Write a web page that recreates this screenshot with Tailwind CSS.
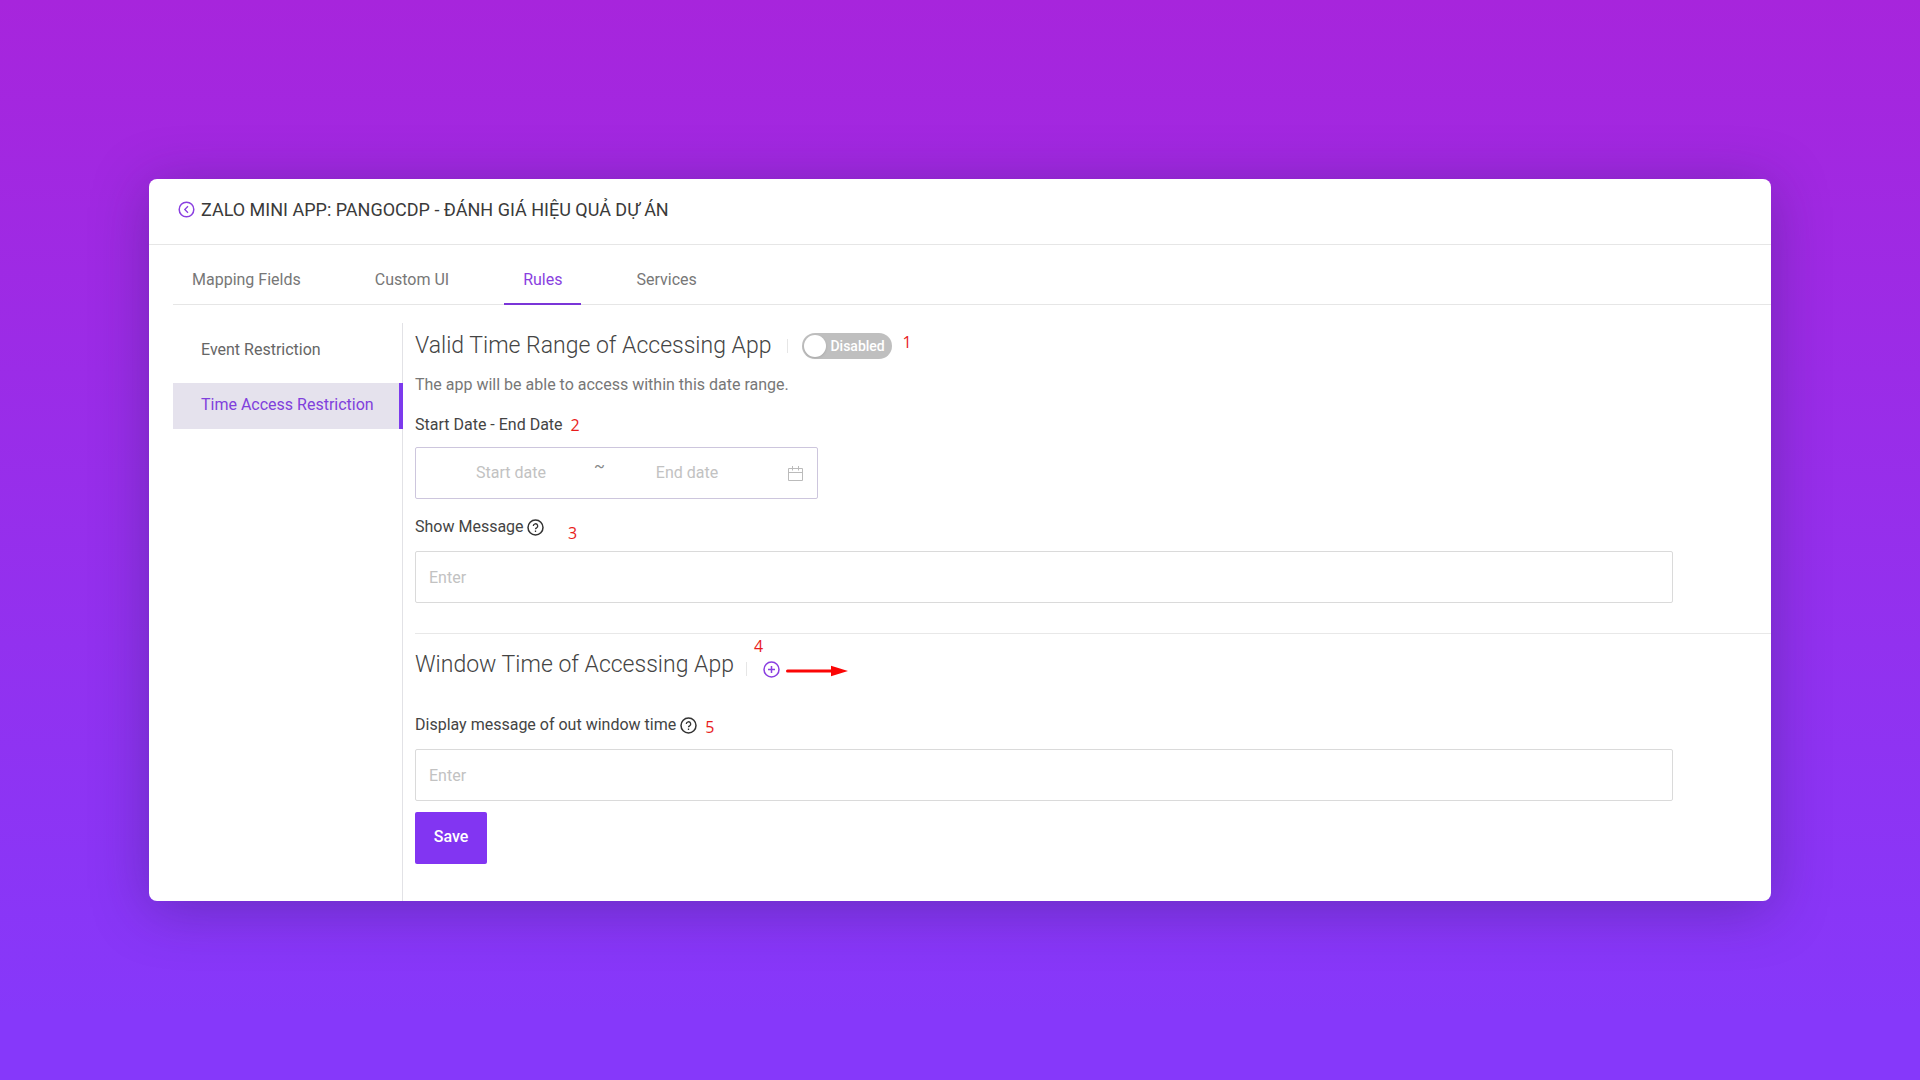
<!DOCTYPE html>
<html lang="en">

<head>
    <meta charset="UTF-8">
    <meta name="viewport" content="width=device-width, initial-scale=1.0">
    <script src="https://cdn.jsdelivr.net/npm/@tailwindcss/browser@4"></script>
    <title>Zalo Mini App - Rules</title>
    <style>
        body {
            font-family: Roboto, 'Noto Sans', sans-serif;
        }
    </style>
</head>

<body class="min-h-screen flex items-center px-[149px] bg-linear-[180deg,#a725dc,#8638fa_94%] text-base text-[#444]">
    <div class="w-full bg-white rounded-lg overflow-hidden shadow-[0_8px_56px_rgba(40,30,90,0.35)]">
        <header class="flex items-center gap-[6px] h-[66px] pl-[29px] pb-1 border-b border-[#e6e6e6]">
            <button type="button" aria-label="Back" class="text-[#8a3fe0]">
                <svg class="size-[17px]" viewBox="0 0 17 17" fill="none" stroke="currentColor" stroke-width="1.5">
                    <circle cx="8.5" cy="8.5" r="7.3" />
                    <path d="M10 5.3 6.8 8.5 10 11.7" stroke-width="1.3" />
                </svg>
            </button>
            <h1 class="text-lg text-[#3a3a3a]">ZALO MINI APP: PANGOCDP - ĐÁNH GIÁ HIỆU QUẢ DỰ ÁN</h1>
        </header>

        <nav class="flex gap-9 ml-6 h-[60px] border-b border-[#e6e6e6] text-[#777]">
            <a href="#" class="px-[19px] pt-[23px]">Mapping Fields</a>
            <a href="#" class="px-[19px] pt-[23px]">Custom UI</a>
            <a href="#" class="px-[19px] pt-[23px] -mb-px border-b-2 border-[#7a35d8] text-[#8a3fe0]">Rules</a>
            <a href="#" class="px-[19px] pt-[23px]">Services</a>
        </nav>

        <div class="flex pl-6 pt-[18px]">
            <aside class="w-[230px] shrink-0 border-r border-[#e2e2e6]">
                <a href="#" class="flex items-center h-[46px] pl-7 mt-1 text-[#666]">Event Restriction</a>
                <a href="#" class="flex items-center h-[46px] pl-7 pb-[2px] mt-[10px] -mr-px bg-[#e5e2ed] border-r-4 border-[#7c3aed] text-[#8040dc]">Time Access Restriction</a>
            </aside>

            <main class="grow pl-3 pb-[37px]">
                <div class="flex items-center h-[46px]">
                    <h2 class="text-[23px] font-light text-[#444]">Valid Time Range of Accessing App</h2>
                    <span class="w-px h-[14px] ml-4 mr-[14px] bg-[#e6e6e6]"></span>
                    <button type="button" role="switch" aria-checked="false" class="flex items-center gap-1 h-[26px] w-[90px] pl-[2px] rounded-full bg-[#bfbfbf] text-white text-sm font-medium">
                        <span class="size-[22px] rounded-full bg-white shadow"></span>
                        Disabled
                    </button>
                    <span class="ml-[10px] mb-2 font-['Open_Sans'] text-[#e81c1c]">1</span>
                </div>
                <p class="mt-1 text-[#777]">The app will be able to access within this date range.</p>

                <div class="flex items-center gap-2 mt-4">
                    <label for="start-date">Start Date - End Date</label>
                    <span class="font-['Open_Sans'] text-[#e81c1c]">2</span>
                </div>
                <div class="flex items-center w-[403px] h-[52px] mt-[10px] pl-3 pr-[14px] border border-[#cdc6dd] rounded-xs">
                    <input id="start-date" type="text" placeholder="Start date" class="w-[166px] text-center outline-none placeholder:text-[#c2c2c2]">
                    <span class="w-[10px] mb-3 text-center text-[#888]">~</span>
                    <input type="text" aria-label="End date" placeholder="End date" class="w-[166px] text-center outline-none placeholder:text-[#c2c2c2]">
                    <svg class="size-[15px] ml-auto text-[#bbb]" viewBox="0 0 15 15" fill="none" stroke="currentColor">
                        <path d="M.5 2.5h14v12H.5zM.5 6.5h14M4.500 0v4.500M10.500 0v4.500" />
                    </svg>
                </div>

                <div class="relative flex items-center gap-[3px] mt-4">
                    <label for="show-message">Show Message</label>
                    <svg class="size-[17px]" viewBox="0 0 17 17" fill="none" stroke="#333" stroke-width="1.500">
                        <circle cx="8.5" cy="8.5" r="7.500" />
                        <path d="M6.300 7a2.200 2.200 0 1 1 3.300 1.900q-1.100.6-1.100 1.300M8.500 11.500v1.500" stroke-width="1.300" />
                    </svg>
                    <span class="absolute left-[153px] top-[6px] font-['Open_Sans'] text-[#e81c1c]">3</span>
                </div>
                <input id="show-message" type="text" placeholder="Enter" class="block w-[calc(100%-98px)] h-[52px] mt-3 px-[13px] border border-[#dadada] rounded-xs outline-none placeholder:text-[#c2c2c2]">

                <hr class="mt-[30px] border-[#e8e8e8]">

                <div class="relative flex items-center h-[62px]">
                    <h2 class="text-[23px] font-light text-[#444]">Window Time of Accessing App</h2>
                    <span class="w-px h-[14px] ml-3 mr-4 mt-2 bg-[#e6e6e6]"></span>
                    <button type="button" aria-label="Add window time" class="mt-2 text-[#8a3fe0]">
                        <svg class="size-[17px]" viewBox="0 0 17 17" fill="none" stroke="currentColor" stroke-width="1.5">
                            <circle cx="8.5" cy="8.5" r="7.500" />
                            <path d="M8.500 5v7M5 8.500h7" />
                        </svg>
                    </button>
                    <svg class="w-[62px] h-3 ml-[6px] mt-3" viewBox="0 0 62 12" fill="#fb0505">
                        <rect y="4.500" width="48" height="3" rx="1.500" />
                        <path d="M45 .8 62 6 45 11.200z" />
                    </svg>
                    <span class="absolute left-[339px] top-0 font-['Open_Sans'] text-[#e81c1c]">4</span>
                </div>

                <div class="flex items-center gap-1 h-6 mt-[17px]">
                    <label for="out-message">Display message of out window time</label>
                    <svg class="size-[17px]" viewBox="0 0 17 17" fill="none" stroke="#333" stroke-width="1.500">
                        <circle cx="8.5" cy="8.5" r="7.500" />
                        <path d="M6.300 7a2.200 2.200 0 1 1 3.300 1.900q-1.100.6-1.100 1.300M8.500 11.500v1.500" stroke-width="1.300" />
                    </svg>
                    <span class="ml-1 mt-1 font-['Open_Sans'] text-[#e81c1c]">5</span>
                </div>
                <input id="out-message" type="text" placeholder="Enter" class="block w-[calc(100%-98px)] h-[52px] mt-3 px-[13px] border border-[#dadada] rounded-xs outline-none placeholder:text-[#c2c2c2]">
                <button type="button" class="block h-[52px] w-[72px] mt-[11px] pb-[2px] rounded-xs bg-[#8235f2] text-white font-medium">Save</button>
            </main>
        </div>
    </div>
</body>

</html>
